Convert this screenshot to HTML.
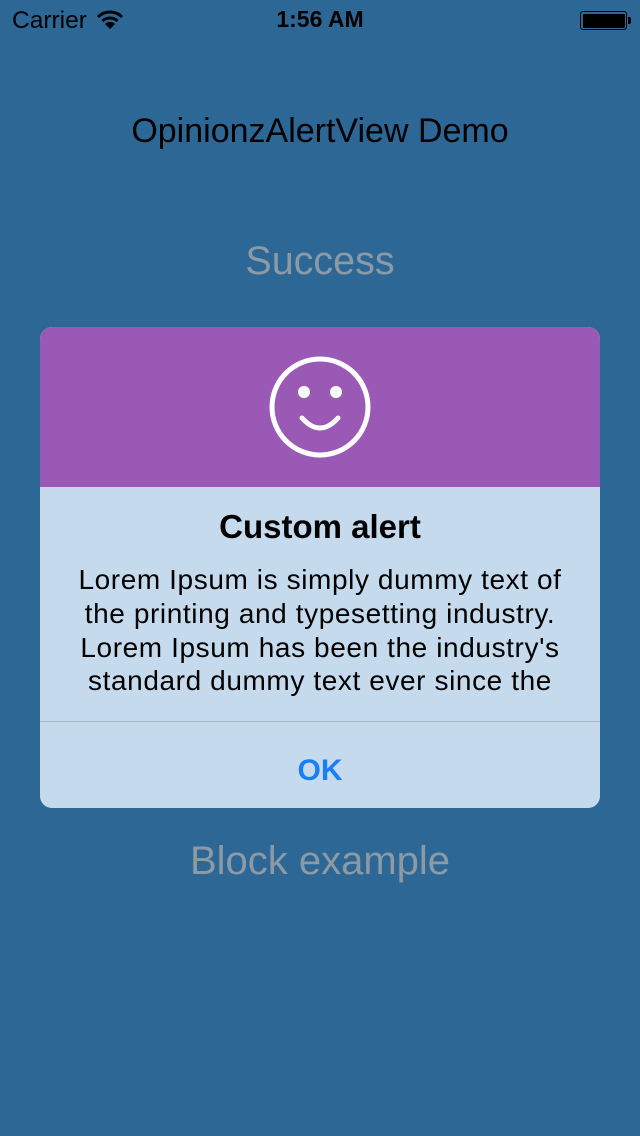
<!DOCTYPE html>
<html><head><meta charset="utf-8"><style>
*{margin:0;padding:0;box-sizing:border-box}
body{width:640px;height:1136px;background:#2c6795;font-family:"Liberation Sans",Arial,sans-serif;position:relative;overflow:hidden}
.abs{position:absolute}
.c{left:0;width:640px;text-align:center}
</style></head><body>
<div class="abs" style="left:12px;top:7px;font-size:24.5px;color:#000">Carrier</div>
<svg class="abs" style="left:96px;top:10px" width="28" height="20" viewBox="0 0 28 20"><path d="M2 7 A17 17 0 0 1 26 7" stroke="#000" stroke-width="3" fill="none"/><path d="M6.5 11 A11 11 0 0 1 21.5 11" stroke="#000" stroke-width="3" fill="none"/><path d="M14 19 L9 14 A7 7 0 0 1 19 14 Z" fill="#000"/></svg>
<div class="abs c" style="top:6px;font-size:23px;font-weight:bold;color:#000">1:56 AM</div>
<div class="abs" style="left:580px;top:11px;width:47px;height:19px;border:1.5px solid #000;border-radius:3px;padding:1.5px"><div style="background:#000;width:100%;height:100%;border-radius:1px"></div></div>
<div class="abs" style="left:628px;top:17px;width:3px;height:7px;background:#000;border-radius:0 2px 2px 0"></div>
<div class="abs c" style="top:112px;font-size:34px;color:#000">OpinionzAlertView Demo</div>
<div class="abs c" style="top:239px;font-size:39.5px;color:#8c9aa6">Success</div>
<div class="abs c" style="top:839px;font-size:40px;color:#8c9aa6">Block example</div>
<div class="abs" style="left:40px;top:327px;width:560px;height:481px;border-radius:12px;overflow:hidden;background:#c5dbed">
 <div style="height:160px;background:#9b59b6;position:relative">
  <svg class="abs" style="left:229px;top:29px" width="102" height="102" viewBox="0 0 102 102"><circle cx="51" cy="51" r="48" stroke="#fff" stroke-width="5" fill="none"/><circle cx="35" cy="36" r="6" fill="#fff"/><circle cx="67" cy="36" r="6" fill="#fff"/><path d="M33 62 Q51 82 69 62" stroke="#fff" stroke-width="5" fill="none" stroke-linecap="round"/></svg>
 </div>
 <div style="text-align:center;font-size:33px;font-weight:bold;color:#000;margin-top:21px">Custom alert</div>
 <div style="text-align:center;font-size:28px;letter-spacing:0.6px;line-height:33.8px;color:#000;margin-top:17px;white-space:nowrap">Lorem Ipsum is simply dummy text of<br>the printing and typesetting industry.<br>Lorem Ipsum has been the industry's<br>standard dummy text ever since the</div>
 <div class="abs" style="left:0;top:394px;width:560px;height:1px;background:#a9b5bf"></div>
 <div class="abs" style="left:0;top:427px;width:560px;text-align:center;font-size:30px;font-weight:bold;color:#1a7ef5">OK</div>
</div>
</body></html>
